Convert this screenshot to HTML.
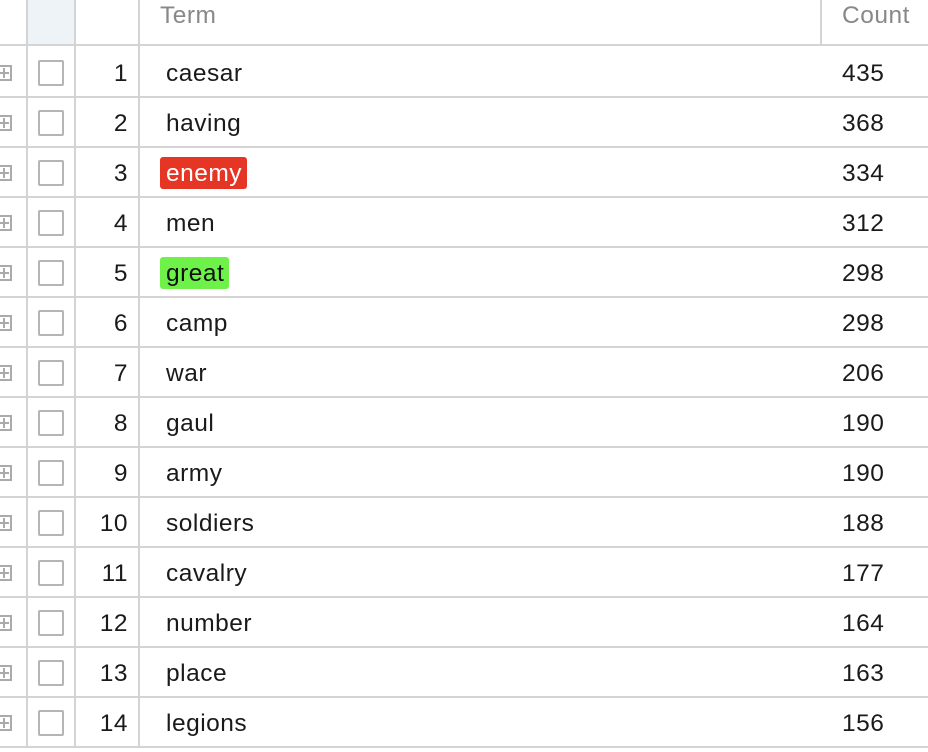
<!DOCTYPE html><html><head><style>
body{margin:0;width:928px;height:752px;background:#fff;overflow:hidden;position:relative;font-family:"Liberation Sans",sans-serif;color:#1a1a1a}
.a{position:absolute}
.v{position:absolute;top:0;width:2px;background:#d4d4d4}
.h{position:absolute;left:0;width:928px;height:2px;background:#d4d4d4}
.t{position:absolute;font-size:24.5px;line-height:28px;letter-spacing:0.5px}
.cb{position:absolute;left:38px;width:22px;height:22px;border:2px solid #b5b5b5;border-radius:2px;background:#fff}
.pl{position:absolute;left:-4px;width:16px;height:16px;border:2px solid #aaa;box-sizing:border-box}
.pl:before{content:"";position:absolute;left:1px;right:1px;top:5px;height:2px;background:#aaa}
.pl:after{content:"";position:absolute;top:1px;bottom:1px;left:5px;width:2px;background:#aaa}
</style></head><body>
<div class="a" style="left:28px;top:0;width:46px;height:44px;background:#eef3f8"></div>
<div class="v" style="left:26px;height:746px"></div>
<div class="v" style="left:74px;height:746px"></div>
<div class="v" style="left:138px;height:746px"></div>
<div class="v" style="left:820px;height:44px"></div>
<div class="t" style="left:160px;top:2px;color:#888">Term</div>
<div class="t" style="left:842px;top:2px;color:#888">Count</div>
<div class="h" style="top:44px"></div>
<div id="rows"></div>
<script>
var d=[["caesar",435],["having",368],["enemy",334],["men",312],["great",298],["camp",298],["war",206],["gaul",190],["army",190],["soldiers",188],["cavalry",177],["number",164],["place",163],["legions",156]];
var h="";
d.forEach(function(r,i){var y=46+i*50;
h+='<div class="pl" style="top:'+(y+19)+'px"></div>';
h+='<div class="cb" style="top:'+(y+14)+'px"></div>';
h+='<div class="t" style="left:78px;width:50px;text-align:right;top:'+(y+14)+'px">'+(i+1)+'</div>';
var st='left:166px;top:'+(y+14)+'px';
if(r[0]=="enemy")st='left:160px;top:'+(y+11)+'px;padding:3px 5px 1px 6px;background:#e53524;color:#fff;border-radius:3px';
if(r[0]=="great")st='left:160px;top:'+(y+11)+'px;padding:3px 5px 1px 6px;background:#6ef24a;color:#111;border-radius:3px';
h+='<div class="t" style="'+st+'">'+r[0]+'</div>';
h+='<div class="t" style="left:842px;top:'+(y+14)+'px">'+r[1]+'</div>';
h+='<div class="h" style="top:'+(y+50)+'px"></div>';});
document.getElementById("rows").innerHTML=h;
</script>
</body></html>
